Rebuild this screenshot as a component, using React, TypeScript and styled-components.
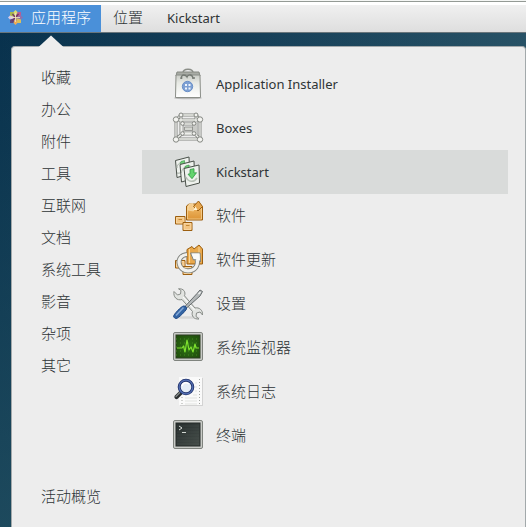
import React, { useState } from "react";
import styled, { createGlobalStyle } from "styled-components";

const GlobalStyle = createGlobalStyle`
  * { box-sizing: border-box; }
  body {
    margin: 0;
    font-family: "Noto Sans", "Noto Sans CJK SC", sans-serif;
    color: #2e3436;
  }
  button {
    margin: 0;
    border: 0;
    background: none;
    color: inherit;
    font-family: inherit;
    text-align: left;
    cursor: pointer;
  }
`;

const Desktop = styled.div`
  display: flex;
  flex-direction: column;
  min-height: 100vh;
  background:
    linear-gradient(to bottom, rgba(38, 84, 100, 0) 0, rgba(38, 84, 100, 0.7) 100%),
    linear-gradient(to right, #07304c 0%, #163f58 50%, #285266 100%);
`;

const WindowEdge = styled.div`
  height: 5px;
  background: linear-gradient(#f4f6f4 0 1px, #949a95 1px 2px, #ffffff 2px 5px);
`;

const TopBar = styled.nav`
  display: flex;
  height: 28px;
  border-bottom: 1px solid #69757b;
  background: linear-gradient(#f0f0f0, #dedede);
`;

const BarButton = styled.button<{ $active?: boolean; $latin?: boolean }>`
  display: flex;
  align-items: center;
  gap: 8px;
  padding: ${(p) => (p.$active ? "0 10px 3px 8px" : p.$latin ? "0 12px 1px" : "0 12px 3px")};
  background: ${(p) => (p.$active ? "#4a90d9" : "transparent")};
  color: ${(p) => (p.$active ? "#ffffff" : "#2e3436")};
  font-size: ${(p) => (p.$latin ? "13px" : "15px")};
  font-weight: ${(p) => (p.$latin ? 400 : 300)};
  line-height: 24px;
`;

const Menu = styled.main`
  position: relative;
  display: flex;
  flex: 1;
  margin: 13px 0 0 11px;
  padding: 15px 17px 14px 0;
  border: 1px solid #a3a9ab;
  border-bottom: 0;
  border-radius: 4px 4px 0 0;
  background: #ededed;
`;

const Pointer = styled.svg`
  position: absolute;
  top: -12px;
  left: 26px;
`;

const Categories = styled.nav`
  display: flex;
  flex-direction: column;
  flex: 0 0 130px;
`;

const CategoryButton = styled.button<{ $last?: boolean }>`
  height: 32px;
  padding: 0 0 2px 29px;
  margin-top: ${(p) => (p.$last ? "auto" : "0")};
  font-size: 15px;
  font-weight: 300;
  line-height: 30px;
`;

const AppList = styled.ul`
  flex: 1;
  margin: 0;
  padding: 0;
  list-style: none;
`;

const AppButton = styled.button<{ $selected: boolean; $latin: boolean }>`
  display: flex;
  align-items: center;
  gap: 12px;
  width: 100%;
  height: 44px;
  padding: 0 30px;
  background: ${(p) => (p.$selected ? "#d9dbda" : "transparent")};
  font-size: ${(p) => (p.$latin ? "13px" : "15px")};
  font-weight: ${(p) => (p.$latin ? 400 : 300)};
  line-height: 24px;
`;

const AppLabel = styled.span<{ $latin: boolean }>`
  padding-bottom: ${(p) => (p.$latin ? "0" : "3px")};
`;

const IconSvg = styled.svg`
  display: block;
  flex: none;
`;

function Icon({ children }: { children: React.ReactNode }) {
  return (
    <IconSvg width="32" height="32" viewBox="0 0 32 32" aria-hidden="true">
      {children}
    </IconSvg>
  );
}

function Logo() {
  return (
    <IconSvg width="15" height="15" viewBox="0 0 15 15" aria-hidden="true">
      <path d="M2 2h11v11H2z" fill="#b9a7ae" />
      <path d="M7.500 0 10.500 3v4.500h-6V3z" fill="#dcdc74" />
      <path d="M7.500 15 4.500 12V7.500h6V12z" fill="#efaa55" />
      <path d="M0 7.500 3 4.500h4v6H3z" fill="#dccbe6" />
      <path d="M15 7.500 12 10.500H8v-6h4z" fill="#8d72ad" />
      <path d="M2 2h3.500l1.500 5-5-1.500z" fill="#a8b84f" />
      <path d="M13 2v3.500L8 7l1.500-5z" fill="#b45d98" />
      <path d="M2 13V9.500L7 8l-1.500 5z" fill="#5a4c86" />
      <path d="M13 13H9.500L8 8l5 1.500z" fill="#d9c05c" />
      <path d="m4.500 4 2.500 3M10.500 4 8 7m-4 4 3-3" stroke="#75395f" strokeWidth="1.300" />
      <path d="M7.500 3v9M3 7.500h9" stroke="#f1e6c4" strokeWidth=".8" />
    </IconSvg>
  );
}

function BagIcon() {
  return (
    <Icon>
      <defs>
        <linearGradient id="bag" x2="0" y2="1">
          <stop stopColor="#c9ccc6" />
          <stop offset=".35" stopColor="#e8eae5" />
          <stop offset="1" stopColor="#fff" />
        </linearGradient>
      </defs>
      <ellipse cx="16" cy="30" rx="14" ry="1.3" fill="#bbb" />
      <path d="M11 5c0-5 10-5 10 0" fill="none" stroke="#8b8e88" strokeWidth="1.5" />
      <path d="m5 4h22l1 4H4z" fill="#a8aba5" stroke="#858982" />
      <path d="M4 7h24l.5 22.500h-25z" fill="url(#bag)" stroke="#8b8e88" />
      <path d="M9 11c.5-6 5-4 6-2 1-3 6-3 6 2" fill="none" stroke="#757a74" strokeWidth="1.3" />
      <circle cx="9.500" cy="10" r="1" fill="#777b76" />
      <circle cx="22" cy="10" r="1" fill="#777b76" />
      <circle cx="15.500" cy="18.500" r="5.200" fill="#7da0d3" stroke="#6b90c8" />
      <path d="M13 16h2v2h-2zm3.500 0h2v2h-2zM13 19.500h2v2h-2zm3.500 0h2v2h-2z" fill="#eef4fc" />
    </Icon>
  );
}

function BoxesIcon() {
  const bars = "M4 8h24v19H4zM9 3h15v19H9zM4 8l5-5M28 8l-4-5M4 27l7-6M28 27l-6-6M10 12h12v9H10z";
  const joints = [
    [9, 3, 2], [24, 3, 2], [10.5, 11.5, 1.8], [22, 11.5, 1.8],
    [10.5, 21.5, 1.8], [22, 21.5, 1.8], [4, 7.5, 2.7], [28, 7.5, 2.7],
    [4, 27.5, 2.7], [28, 27.5, 2.7],
  ];
  return (
    <Icon>
      <path d={bars} fill="none" stroke="#858883" strokeWidth="3" />
      <path d={bars} fill="none" stroke="#eeefec" strokeWidth="1.3" />
      <path d="M12.500 15h8v3.500h-8z" fill="#d5d7d2" stroke="#858883" strokeWidth=".8" />
      {joints.map(([x, y, r]) => (
        <circle key={`${x}-${y}`} cx={x} cy={y} r={r} fill="#f4f4f1" stroke="#858883" strokeWidth="1" />
      ))}
    </Icon>
  );
}

function KickstartIcon() {
  return (
    <Icon>
      <g fill="#eef1ed" stroke="#4a514a" strokeWidth="1" strokeLinejoin="round">
        <path d="M3.500 4.500 17 1l.7 17L5 21.500z" />
        <path d="M5 12c0-4 4-7 8-6" fill="none" stroke="#a9b2a8" />
        <path d="M9 5.500 12.500 4.500v3l2-.5-3.500 4-3-3z" fill="#6fd079" stroke="#3c9a4b" strokeWidth=".6" />
        <path d="M5 17c3 1 8-2 9-8" fill="none" stroke="#9aa39a" />
        <path d="M8 8.500 22 5l.6 17L9.500 26z" />
        <path d="M9.500 17c0-5 5-8 9-7" fill="none" stroke="#a9b2a8" />
        <path d="M13.500 10 17 9v3l2-.5-3.500 4-3-3z" fill="#6fd079" stroke="#3c9a4b" strokeWidth=".6" />
        <path d="M12 12.500 27 9l.5 18L14 30.500z" />
        <path d="M14 21c2 5 8 6 11 1" fill="none" stroke="#b6c0b5" strokeWidth="1.500" />
        <path d="m18 13.500 4-.8v4.300l2.500-.3-4.500 6-4-4.500 2-.4z" fill="#63d46e" stroke="#309b41" strokeWidth=".8" />
      </g>
    </Icon>
  );
}

function SmallParcels() {
  return (
    <g stroke="#9c5f10" strokeLinejoin="round">
      <path d="M3.500 16.500h9.500v7.500H3.500z" fill="#efb461" />
      <path d="M4.500 17.500h7.500v5.500H4.500z" fill="#f3c583" stroke="#fbe0b4" strokeWidth=".7" />
      <path d="M6.500 19.500h3.500" stroke="#c28737" />
      <path d="M11 22.500h9v8h-9z" fill="#efb461" />
      <path d="M12 23.500h7v6h-7z" fill="#f3c583" stroke="#fbe0b4" strokeWidth=".7" />
      <path d="M14 25.500h3.500" stroke="#c28737" />
    </g>
  );
}

function SoftwareIcon() {
  return (
    <Icon>
      <defs>
        <linearGradient id="crate" x2="0" y2="1">
          <stop stopColor="#f3bf70" />
          <stop offset="1" stopColor="#dc9333" />
        </linearGradient>
      </defs>
      <g stroke="#9c5f10" strokeLinejoin="round">
        <path d="M14.500 6 17 4h9l4.500 2.500v13.500h-16z" fill="url(#crate)" />
        <path d="M15.500 6.500h14v12.500h-14z" fill="none" stroke="#f9d99d" strokeWidth=".7" />
        <path d="m17 4 4-.5.500 7.500-5.500-1z" fill="#f4cb8b" stroke="#fae0b0" strokeWidth=".6" />
        <path d="m21.500 6.500 5-5.500 4 5.500-4.500 4.500z" fill="#e8a850" />
        <path d="m21.500 10 2-3.500 2 3.500z" fill="#fff3d4" stroke="none" />
      </g>
      <SmallParcels />
    </Icon>
  );
}

function UpdateIcon() {
  const ring = "M15 10.500C8 11 5.500 17 8 22c3 6 12 6.500 16 1 1.500-2.500 2-5 1-8";
  return (
    <Icon>
      <SmallParcels />
      <g stroke="#9c5f10" strokeLinejoin="round">
        <path d="M15 5.500 20 2.500l2 2.500 5-4 3.500 4v15h-15.500z" fill="#e9a94d" />
        <path d="M17.500 5v14M27 3v16" stroke="#f9d797" fill="none" />
      </g>
      <path d={ring} fill="none" stroke="#7f827d" strokeWidth="5" />
      <path d="M18.500 9h9.500l.5 9-3-3-4 1z" fill="#f7f7f5" stroke="#7f827d" strokeLinejoin="round" />
      <path d={ring} fill="none" stroke="#f1f1ee" strokeWidth="3.200" />
      <path d="M20 9.500h7.500l.3 7-6-2z" fill="#fafaf8" />
    </Icon>
  );
}

function SettingsIcon() {
  return (
    <Icon>
      <ellipse cx="15" cy="29.500" rx="13" ry="1.300" fill="#d7d7d6" />
      <path
        d="M2 3.500 5.500 7l3-1L9 2.500 6.500.800c5-.5 7.500 3 6 7L23 20c4-1 8 2 7.500 7L28 24l-3.500 1-.5 3.500 3 2.500c-5 .5-8-3-6.500-7.500L10 11.500C5 13 1 9 2 3.500z"
        fill="#e2e4e1" stroke="#888c88"
      />
      <path d="m11 9 11.500 13" stroke="#fff" />
      <path d="m12.500 19 12.500-13.500L28 2l2.500 1.500-2.500 4.500L14 20.500z" fill="#b4b8b9" stroke="#666c6e" />
      <path d="m26.500 6 2-2" stroke="#f2f3f3" strokeWidth="1.500" />
      <path d="M1.500 28.500c0-2 7.500-10 10-10.500 2-.2 3.500 1.500 3 3-1 2-8 9.500-10.500 9.500-1 0-2-1-2.500-2z" fill="#3465a4" stroke="#204a87" />
      <path d="m4 27.500 7.500-8" stroke="#83a8d7" strokeWidth="1.500" />
    </Icon>
  );
}

function MonitorIcon() {
  return (
    <Icon>
      <defs>
        <radialGradient id="scope" r=".8">
          <stop stopColor="#2f7416" />
          <stop offset="1" stopColor="#1b4409" />
        </radialGradient>
      </defs>
      <rect x="1.500" y=".500" width="29" height="28" rx="1.500" fill="#c8cac6" stroke="#7f837e" />
      <rect x="4" y="3" width="24" height="23" fill="url(#scope)" stroke="#2c3d22" />
      <path d="M4 7h24M4 11h24M4 15h24M4 19h24M4 23h24" stroke="#4b9526" strokeWidth=".8" strokeDasharray="1 3" />
      <path d="M5 16h5l1.500-2 1.500 6 2-12 2 10 2-3 2 5 2-8 1 4h3" fill="none" stroke="#7fe22f" strokeWidth="1.200" strokeLinejoin="round" />
    </Icon>
  );
}

function LogIcon() {
  return (
    <Icon>
      <path d="M8 2h23v28H8z" fill="#d3d3d3" />
      <path d="M7 1h23v28H7z" fill="#fafafa" />
      <path d="M27.500 3v25M10 21v7" stroke="#a3a6a2" strokeDasharray="1 2" />
      <path d="M13 22h12M13 25h12M13 28h12M23 7h2M23 11h2M23 15h2M21 19h4" stroke="#e1e3e0" />
      <path d="m8.500 17-4 4" stroke="#292d2e" strokeWidth="4.200" strokeLinecap="round" />
      <path d="m8 16.500-4 4" stroke="#858989" strokeWidth="1.200" strokeLinecap="round" />
      <circle cx="14" cy="11" r="6.800" fill="#e4edf7" stroke="#25366f" strokeWidth="3" />
      <circle cx="14" cy="11" r="6.800" fill="none" stroke="#5470b4" strokeWidth="1.200" />
      <path d="M10 10c1-4 5-4 7-2" fill="none" stroke="#fff" strokeWidth="1.500" />
    </Icon>
  );
}

function TerminalIcon() {
  return (
    <Icon>
      <defs>
        <linearGradient id="screen" x2="1" y2="1">
          <stop stopColor="#252c2c" />
          <stop offset="1" stopColor="#454d49" />
        </linearGradient>
      </defs>
      <rect x="1.500" y=".500" width="29" height="28" rx="1.500" fill="#c8cac6" stroke="#7f837e" />
      <rect x="4" y="3" width="24" height="23" fill="url(#screen)" stroke="#252a29" />
      <path d="m7 6 3 2-3 2M10 12.500h4" fill="none" stroke="#e2e6e1" strokeWidth="1" />
      <path d="M5 6h22M5 9h22M5 12h22M5 15h22M5 18h22M5 21h22M5 24h22" stroke="#5d6661" strokeWidth=".4" opacity=".6" />
    </Icon>
  );
}

const categories = ["收藏", "办公", "附件", "工具", "互联网", "文档", "系统工具", "影音", "杂项", "其它"];

const apps = [
  { name: "Application Installer", Glyph: BagIcon, latin: true },
  { name: "Boxes", Glyph: BoxesIcon, latin: true },
  { name: "Kickstart", Glyph: KickstartIcon, latin: true },
  { name: "软件", Glyph: SoftwareIcon, latin: false },
  { name: "软件更新", Glyph: UpdateIcon, latin: false },
  { name: "设置", Glyph: SettingsIcon, latin: false },
  { name: "系统监视器", Glyph: MonitorIcon, latin: false },
  { name: "系统日志", Glyph: LogIcon, latin: false },
  { name: "终端", Glyph: TerminalIcon, latin: false },
];

export default function App() {
  const [selected, setSelected] = useState("Kickstart");
  return (
    <>
      <GlobalStyle />
      <Desktop lang="zh-CN">
        <WindowEdge />
        <TopBar>
          <BarButton $active>
            <Logo />
            应用程序
          </BarButton>
          <BarButton>位置</BarButton>
          <BarButton $latin>Kickstart</BarButton>
        </TopBar>
        <Menu>
          <Pointer width="26" height="13" viewBox="0 0 26 13" aria-hidden="true">
            <path d="M0 12.500 13 .500l13 12z" fill="#ededed" />
          </Pointer>
          <Categories>
            {categories.map((name) => (
              <CategoryButton key={name}>{name}</CategoryButton>
            ))}
            <CategoryButton $last>活动概览</CategoryButton>
          </Categories>
          <AppList>
            {apps.map(({ name, Glyph, latin }) => (
              <li key={name}>
                <AppButton $selected={selected === name} $latin={latin} onClick={() => setSelected(name)}>
                  <Glyph />
                  <AppLabel $latin={latin}>{name}</AppLabel>
                </AppButton>
              </li>
            ))}
          </AppList>
        </Menu>
      </Desktop>
    </>
  );
}
